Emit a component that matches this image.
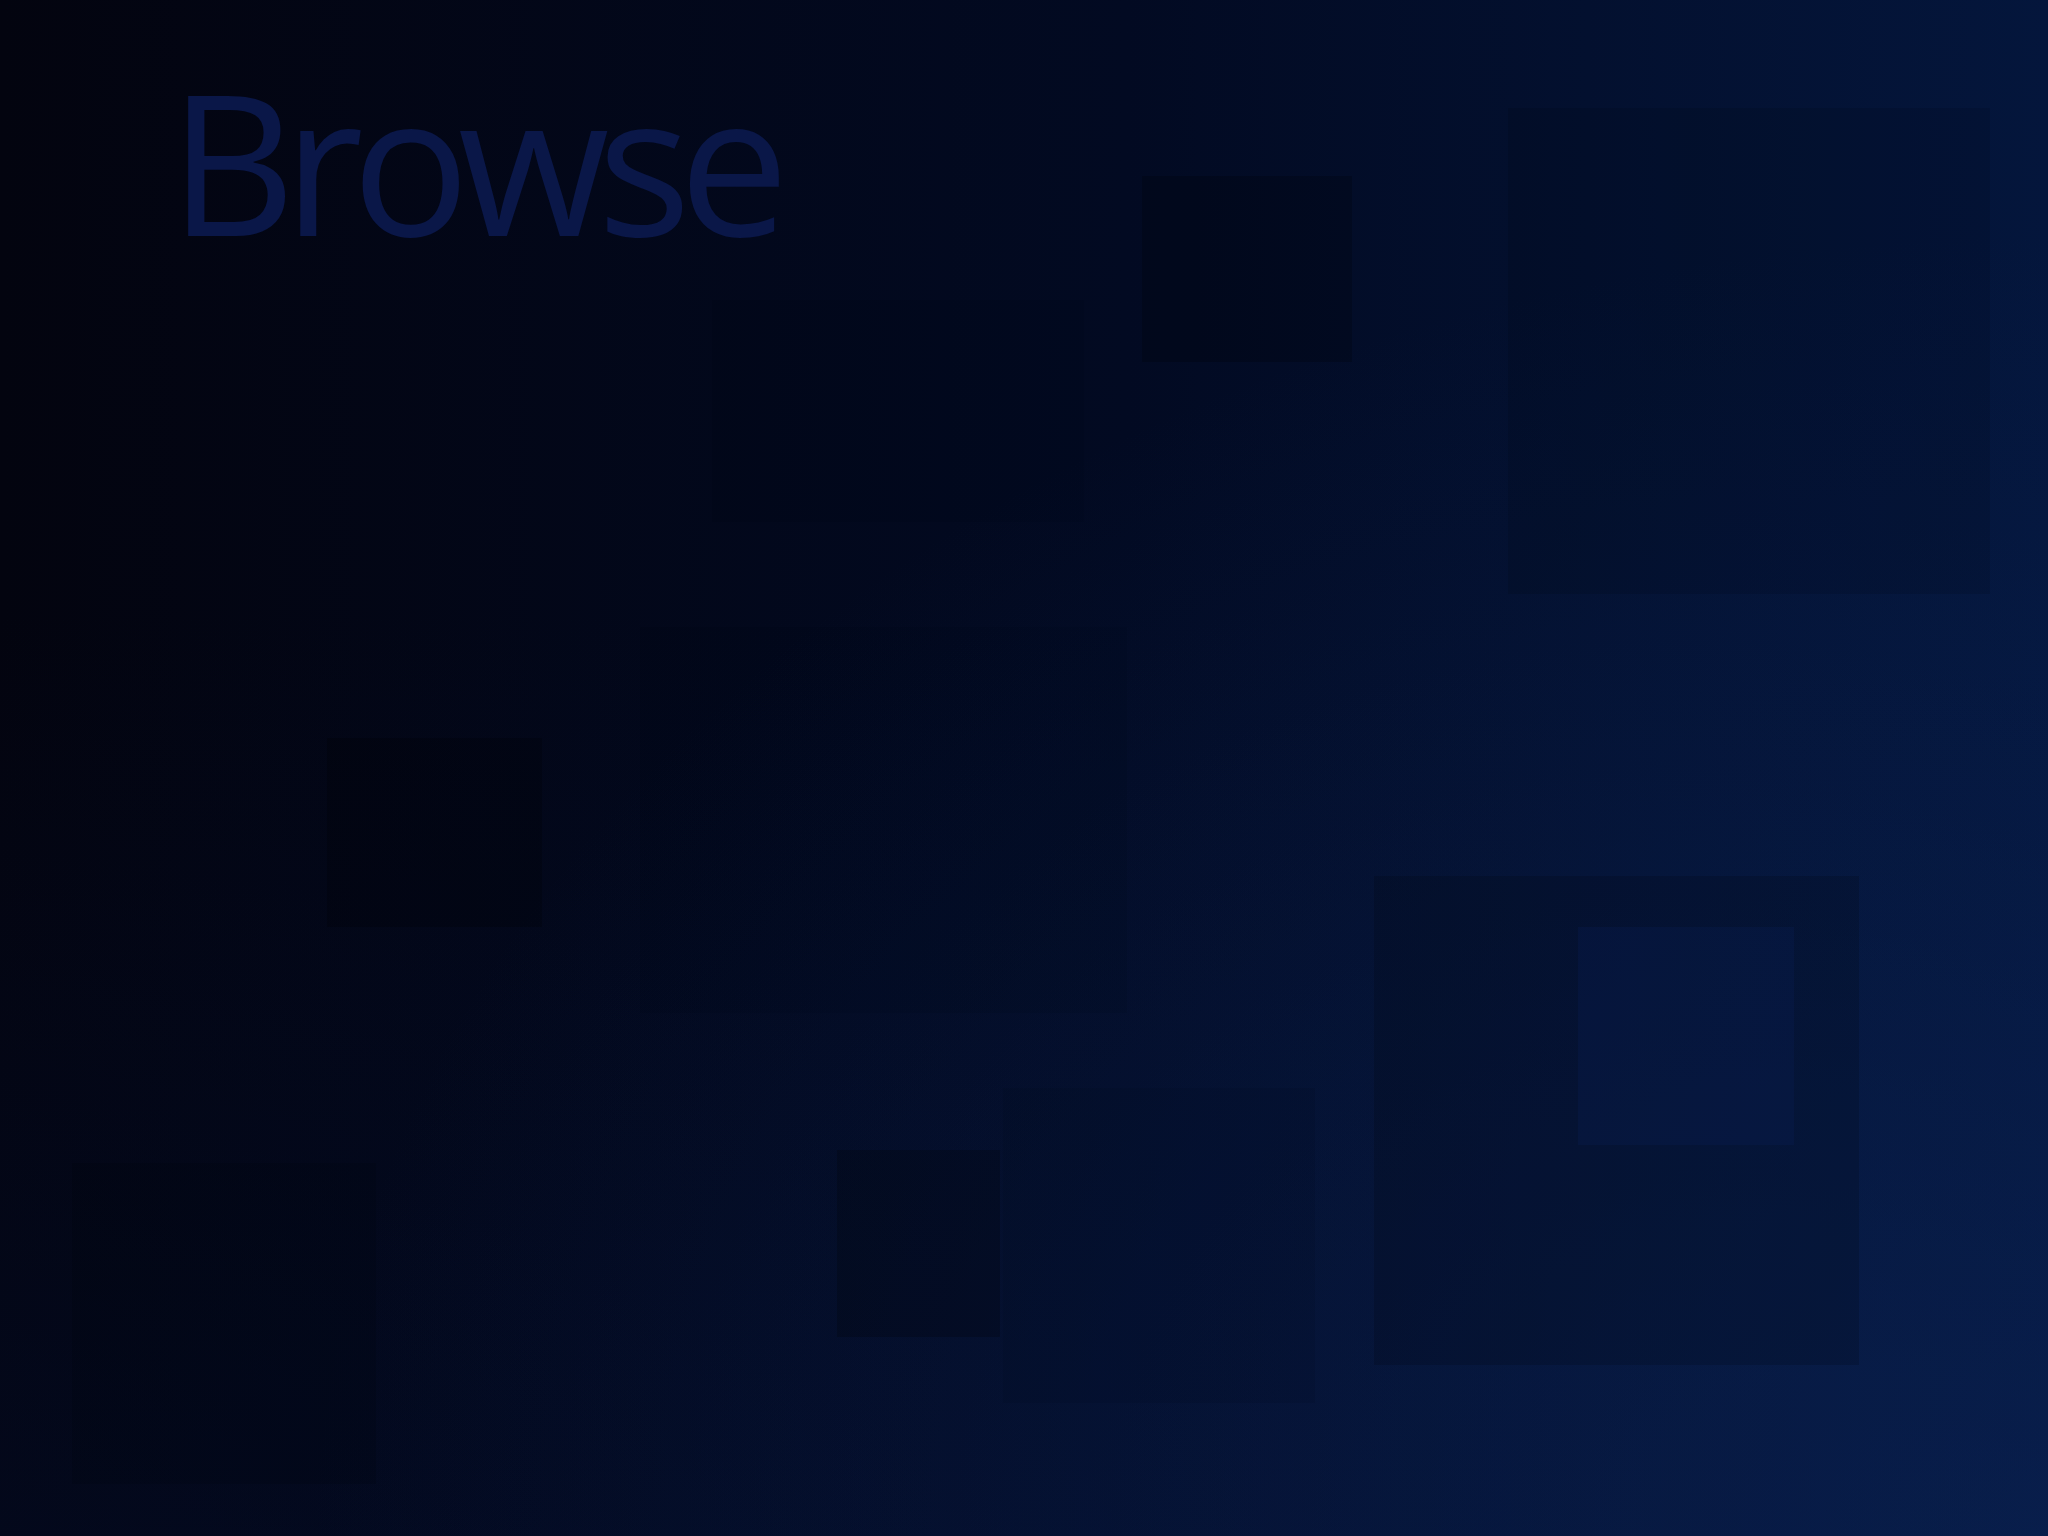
const TILES = [
  { x: 1142, y: 176, w: 210, h: 186, tone: 'bg-black/20' },
  { x: 1508, y: 108, w: 482, h: 486, tone: 'bg-black/10' },
  { x: 712, y: 300, w: 372, h: 222, tone: 'bg-black/[0.04]' },
  { x: 640, y: 627, w: 487, h: 386, tone: 'bg-black/[0.05]' },
  { x: 327, y: 738, w: 215, h: 189, tone: 'bg-black/20' },
  { x: 1374, y: 876, w: 485, h: 489, tone: 'bg-black/15' },
  { x: 72, y: 1163, w: 304, h: 321, tone: 'bg-black/10' },
  { x: 837, y: 1150, w: 163, h: 187, tone: 'bg-black/20' },
  { x: 1003, y: 1088, w: 312, h: 315, tone: 'bg-black/[0.06]' },
];

export default function App() {
  return (
    <div className="relative w-full h-screen overflow-hidden bg-[radial-gradient(ellipse_at_100%_100%,rgba(14,42,98,0.45)_0%,transparent_60%),linear-gradient(180deg,transparent_40%,rgba(4,16,50,0.35)_100%),linear-gradient(90deg,#03040f_0%,#020a22_55%,#04163c_100%)]">
      {TILES.map((t, i) => (
        <div
          key={i}
          className={`absolute ${t.tone}`}
          style={{ left: t.x, top: t.y, width: t.w, height: t.h }}
        />
      ))}
      {/* lighter tile inside the big one */}
      <div
        className="absolute bg-[#0b2466]/20"
        style={{ left: 1578, top: 927, width: 216, height: 218 }}
      />

      <div className="relative pl-[169px] pt-[62px]">
        <h1 className="font-['Open_Sans',sans-serif] font-normal text-[196px] leading-none tracking-[-12px] text-[#0a1748]">
          Browse
        </h1>
      </div>
    </div>
  );
}
